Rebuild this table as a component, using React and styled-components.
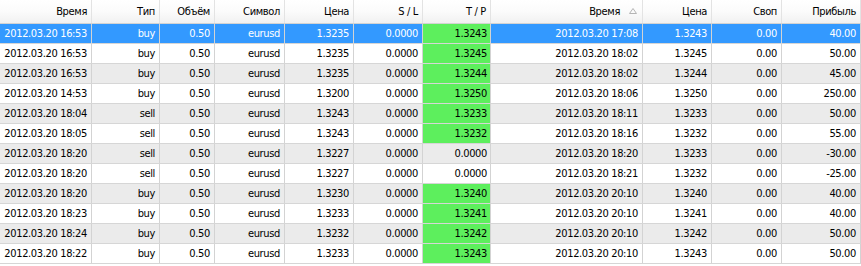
import React from "react";
import styled, { createGlobalStyle } from "styled-components";

const GlobalStyle = createGlobalStyle`
  html, body { margin: 0; padding: 0; background: #ffffff; }
  body { font-family: "DejaVu Sans Condensed", "Liberation Sans", sans-serif; font-size: 11px; letter-spacing: -0.35px; color: #000; }
`;

const COLS = "92px 68px 55px 70px 69px 69px 68px 152px 69px 70px 1fr";

const Table = styled.div`
  width: 861px;
  height: 266px;
  overflow: hidden;
  background: #ffffff;
`;

const HeaderRow = styled.div`
  display: grid;
  grid-template-columns: ${COLS};
  height: 24px;
  box-sizing: border-box;
  border-bottom: 1px solid #d3d3d3;
  background: linear-gradient(#ffffff 0%, #fbfbfb 50%, #f1f1f1 100%);
`;

const HeaderCell = styled.div`
  display: flex;
  align-items: center;
  justify-content: flex-end;
  gap: 9px;
  padding-right: ${(p) => (p.$sorted ? "5px" : "4px")};
  border-right: 1px solid #e3e3e3;
  box-sizing: border-box;
  white-space: nowrap;
  color: #000;
`;

const SortMark = styled.svg`
  width: 8px;
  height: 6px;
  flex: none;
  margin-top: -1px;
`;

const Row = styled.div`
  display: grid;
  grid-template-columns: ${COLS};
  height: 20px;
  box-sizing: border-box;
  border-bottom: 1px solid #d6d6d6;
  background: ${(p) => (p.$selected ? "#3399ff" : p.$alt ? "#ebebeb" : "#ffffff")};
  color: ${(p) => (p.$selected ? "#ffffff" : "#000000")};
`;

const Cell = styled.div`
  display: flex;
  align-items: center;
  justify-content: flex-end;
  padding-right: 4px;
  box-sizing: border-box;
  border-right: 1px solid #d3d3d3;
  white-space: nowrap;
`;

const TPCell = styled(Cell)`
  background: ${(p) => (p.$hit ? "#5def5d" : "transparent")};
  color: ${(p) => (p.$hit ? "#000000" : "inherit")};
  padding-right: 3px;
`;

const headers = ["Время", "Тип", "Объём", "Символ", "Цена", "S / L", "T / P", "Время", "Цена", "Своп", "Прибыль"];

const rows = [
  ["2012.03.20 16:53", "buy", "1.3235", "1.3243", "2012.03.20 17:08", "1.3243", "40.00"],
  ["2012.03.20 16:53", "buy", "1.3235", "1.3245", "2012.03.20 18:02", "1.3245", "50.00"],
  ["2012.03.20 16:53", "buy", "1.3235", "1.3244", "2012.03.20 18:02", "1.3244", "45.00"],
  ["2012.03.20 14:53", "buy", "1.3200", "1.3250", "2012.03.20 18:06", "1.3250", "250.00"],
  ["2012.03.20 18:04", "sell", "1.3243", "1.3233", "2012.03.20 18:11", "1.3233", "50.00"],
  ["2012.03.20 18:05", "sell", "1.3243", "1.3232", "2012.03.20 18:16", "1.3232", "55.00"],
  ["2012.03.20 18:20", "sell", "1.3227", "0.0000", "2012.03.20 18:20", "1.3233", "-30.00"],
  ["2012.03.20 18:20", "sell", "1.3227", "0.0000", "2012.03.20 18:21", "1.3232", "-25.00"],
  ["2012.03.20 18:20", "buy", "1.3230", "1.3240", "2012.03.20 20:10", "1.3240", "40.00"],
  ["2012.03.20 18:23", "buy", "1.3233", "1.3241", "2012.03.20 20:10", "1.3241", "40.00"],
  ["2012.03.20 18:24", "buy", "1.3232", "1.3242", "2012.03.20 20:10", "1.3242", "50.00"],
  ["2012.03.20 18:22", "buy", "1.3233", "1.3243", "2012.03.20 20:10", "1.3243", "50.00"],
];

export default function App() {
  return (
    <>
      <GlobalStyle />
      <Table>
        <HeaderRow>
          {headers.map((h, i) => (
            <HeaderCell key={i} $sorted={i === 7}>
              <span>{h}</span>
              {i === 7 && (
                <SortMark viewBox="0 0 8 6">
                  <path d="M0.5 5.5 L4 0.5 L7.5 5.5 Z" fill="none" stroke="#b4b4b4" strokeWidth="1" />
                </SortMark>
              )}
            </HeaderCell>
          ))}
        </HeaderRow>
        {rows.map((r, i) => {
          const [open, type, price, tp, close, closePrice, profit] = r;
          const hit = tp !== "0.0000";
          return (
            <Row key={i} $selected={i === 0} $alt={i % 2 === 0}>
              <Cell>{open}</Cell>
              <Cell>{type}</Cell>
              <Cell>0.50</Cell>
              <Cell>eurusd</Cell>
              <Cell>{price}</Cell>
              <Cell>0.0000</Cell>
              <TPCell $hit={hit}>{tp}</TPCell>
              <Cell>{close}</Cell>
              <Cell>{closePrice}</Cell>
              <Cell>0.00</Cell>
              <Cell>{profit}</Cell>
            </Row>
          );
        })}
      </Table>
    </>
  );
}
